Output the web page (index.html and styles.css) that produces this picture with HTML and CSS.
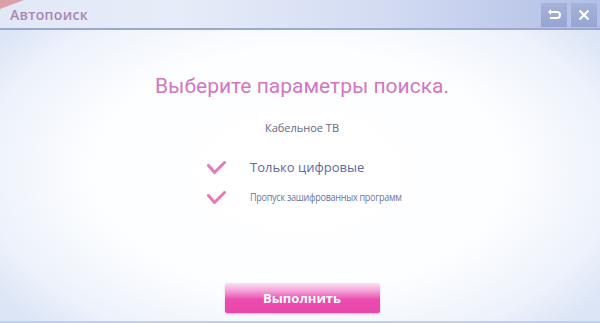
FILE: index.html
```html
<!DOCTYPE html>
<html lang="ru">
<head>
<meta charset="utf-8">
<link rel="stylesheet" href="styles.css">
</head>
<body>
<div class="screen">
  <header class="topbar">
    <span class="corner"></span>
    <h1 class="title">Автопоиск</h1>
    <div class="tools">
      <span class="tool">
        <svg width="14" height="12" viewBox="0 0 14 12"><path d="M2 3h8a3 3 0 0 1 0 6H3" fill="none" stroke="#fff" stroke-width="2"/><path d="M1 3l3-3v6z" fill="#fff"/></svg>
      </span>
      <span class="tool">
        <svg width="12" height="12" viewBox="0 0 12 12"><path d="M1.5 1.5l9 9M10.5 1.5l-9 9" stroke="#fff" stroke-width="2.2"/></svg>
      </span>
    </div>
  </header>
  <main class="content">
    <h2 class="heading">Выберите параметры поиска.</h2>
    <p class="mode">Кабельное ТВ</p>
    <ul class="options">
      <li class="option">
        <svg class="check" width="19" height="13" viewBox="0 0 19 13"><path d="M1.5 4.5l6 7 10-10" fill="none" stroke="#e67ab8" stroke-width="3" stroke-linejoin="round" stroke-linecap="round"/></svg>
        <span class="opt-big">Только цифровые</span>
      </li>
      <li class="option">
        <svg class="check" width="19" height="13" viewBox="0 0 19 13"><path d="M1.5 4.5l6 7 10-10" fill="none" stroke="#e67ab8" stroke-width="3" stroke-linejoin="round" stroke-linecap="round"/></svg>
        <span class="opt-small">Пропуск зашифрованных программ</span>
      </li>
    </ul>
    <div class="spacer"></div>
    <button class="run">Выполнить</button>
  </main>
</div>
</body>
</html>
```
FILE: styles.css
```css
html, body {
  margin: 0;
  padding: 0;
}
body {
  width: 600px;
  height: 323px;
  overflow: hidden;
  font-family: "Open Sans", "Noto Sans", sans-serif;
}
.screen {
  width: 600px;
  height: 323px;
  display: flex;
  flex-direction: column;
  background: #e4ebf8;
}
.topbar {
  position: relative;
  height: 30px;
  flex: none;
  display: flex;
  align-items: center;
  background: linear-gradient(to right, #e2e8f6 0%, #e6ecf8 30%, #d2dbf2 65%, #b2bfe6 100%);
  border-bottom: 2px solid #9aa8d2;
  box-sizing: border-box;
}
.corner {
  position: absolute;
  left: 0;
  top: 0;
  width: 0;
  height: 0;
  border-top: 9px solid #dca0a8;
  border-right: 24px solid transparent;
}
.title {
  margin: 0 0 0 10px;
  font-size: 14px;
  font-weight: 600;
  color: #a886b6;
  letter-spacing: 0.3px;
  line-height: 1;
  padding-top: 2px;
}
.tools {
  margin-left: auto;
  display: flex;
  gap: 4px;
  margin-right: 3px;
  align-self: flex-start;
  margin-top: 3px;
}
.tool {
  width: 26px;
  height: 24px;
  background: linear-gradient(#a6b2dc, #97a4d2);
  display: flex;
  align-items: center;
  justify-content: center;
}
.content {
  flex: 1;
  display: flex;
  flex-direction: column;
  align-items: center;
  padding-left: 4px;
  background: radial-gradient(ellipse 62% 75% at 50% 48%, #ffffff 0%, #fdfeff 55%, #edf2fb 85%, #dce5f6 100%);
  border-bottom: 2px solid #c2cfe9;
}
.heading {
  margin: 43px 0 0 0;
  font-family: Roboto, "Open Sans", sans-serif;
  font-size: 21px;
  font-weight: 400;
  color: #d276c4;
  line-height: 26px;
}
.mode {
  margin: 22px 0 0 0;
  font-size: 11px;
  color: #626884;
  line-height: 14px;
}
.options {
  list-style: none;
  margin: 24px 0 0 0;
  padding: 0;
  align-self: flex-start;
  margin-left: 203px;
  display: flex;
  flex-direction: column;
  gap: 14px;
}
.option {
  display: flex;
  align-items: center;
  height: 16px;
}
.check {
  flex: none;
}
.opt-big {
  margin-left: 24px;
  font-size: 13px;
  color: #5c6aa6;
}
.opt-small {
  margin-left: 24px;
  font-size: 10px;
  color: #6a74ac;
  letter-spacing: -0.3px;
  transform: scaleX(0.905);
  transform-origin: left center;
}
.spacer {
  flex: 1;
}
.run {
  width: 155px;
  height: 30px;
  margin-bottom: 8px;
  border: none;
  border-radius: 2px;
  background: linear-gradient(#fbe2f3 0%, #f49bd5 28%, #ea4dae 55%, #e846a9 100%);
  box-shadow: 0 1px 2px rgba(150, 80, 130, 0.35);
  color: #ffffff;
  font-family: "Open Sans", sans-serif;
  font-size: 13px;
  font-weight: 700;
  padding: 0;
}
```
